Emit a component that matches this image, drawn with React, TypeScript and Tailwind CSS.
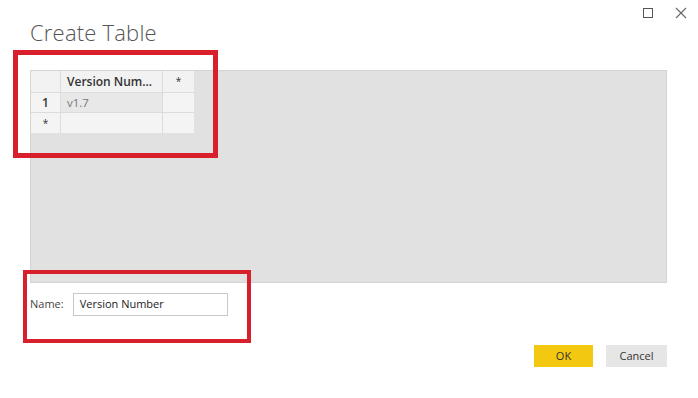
export default function App() {
  const font = { fontFamily: '"Segoe UI", "Open Sans", "Noto Sans", sans-serif' };
  return (
    <div className="relative w-[698px] h-[398px] bg-white overflow-hidden" style={font}>
      {/* window controls */}
      <div className="absolute top-[7px] right-[11px] flex items-center gap-[22px]">
        <div className="w-[10px] h-[10px] border border-[#555]" />
        <svg width="12" height="12" viewBox="0 0 12 12" className="text-[#666]">
          <path d="M1 1L11 11M11 1L1 11" stroke="currentColor" strokeWidth="1.1" />
        </svg>
      </div>

      <div className="flex flex-col pl-[30px] pr-[31px] pt-[17px]">
        <h1 className="text-[22px] leading-[30px] font-light text-[#555] tracking-[0.2px]">Create Table</h1>

        <div className="mt-[23px] h-[213px] bg-[#e1e1e1] border border-[#d4d4d4]">
          <div className="grid grid-cols-[30px_102px_31px] w-[163px] text-[12px] text-[#333]">
            <div className="h-[22px] bg-[#f2f2f2] border-r border-b border-[#dcdcdc]" />
            <div className="h-[22px] bg-[#f2f2f2] border-r border-b border-[#dcdcdc] font-semibold text-[#333] px-[6px] flex items-center">
              Version Num...
            </div>
            <div className="h-[22px] bg-[#f2f2f2] border-b border-[#dcdcdc] flex items-center justify-center text-[10px]">*</div>

            <div className="h-[20px] bg-[#f4f4f4] border-r border-b border-[#dcdcdc] flex items-center justify-center font-semibold">1</div>
            <div className="h-[20px] bg-[#e8e8e8] border-r border-b border-[#dcdcdc] px-[6px] flex items-center text-[11.5px] text-[#777]">v1.7</div>
            <div className="h-[20px] bg-[#f4f4f4] border-b border-[#dcdcdc]" />

            <div className="h-[20px] bg-[#f4f4f4] border-r border-[#dcdcdc] flex items-center justify-center text-[10px]">*</div>
            <div className="h-[20px] bg-[#f4f4f4] border-r border-[#dcdcdc]" />
            <div className="h-[20px] bg-[#f4f4f4]" />
          </div>
        </div>

        <div className="mt-[10px] flex items-center gap-[9px]">
          <span className="text-[11px] text-[#444]">Name:</span>
          <div className="w-[155px] h-[23px] border border-[#c8c8c8] flex items-center px-[6px] text-[11px] text-[#222]">
            Version Number
          </div>
        </div>

        <div className="mt-[29px] flex justify-end gap-[13px]">
          <button className="w-[59px] h-[22px] bg-[#f2c811] text-[11px] text-[#333]">OK</button>
          <button className="w-[61px] h-[22px] bg-[#e6e6e6] text-[11px] text-[#333]">Cancel</button>
        </div>
      </div>

      {/* annotation boxes */}
      <div className="absolute left-[13px] top-[50px] w-[205px] h-[108px] border-[5px] border-[#d7202b]" />
      <div className="absolute left-[23px] top-[270px] w-[228px] h-[73px] border-[4px] border-[#d7202b]" />
    </div>
  );
}
